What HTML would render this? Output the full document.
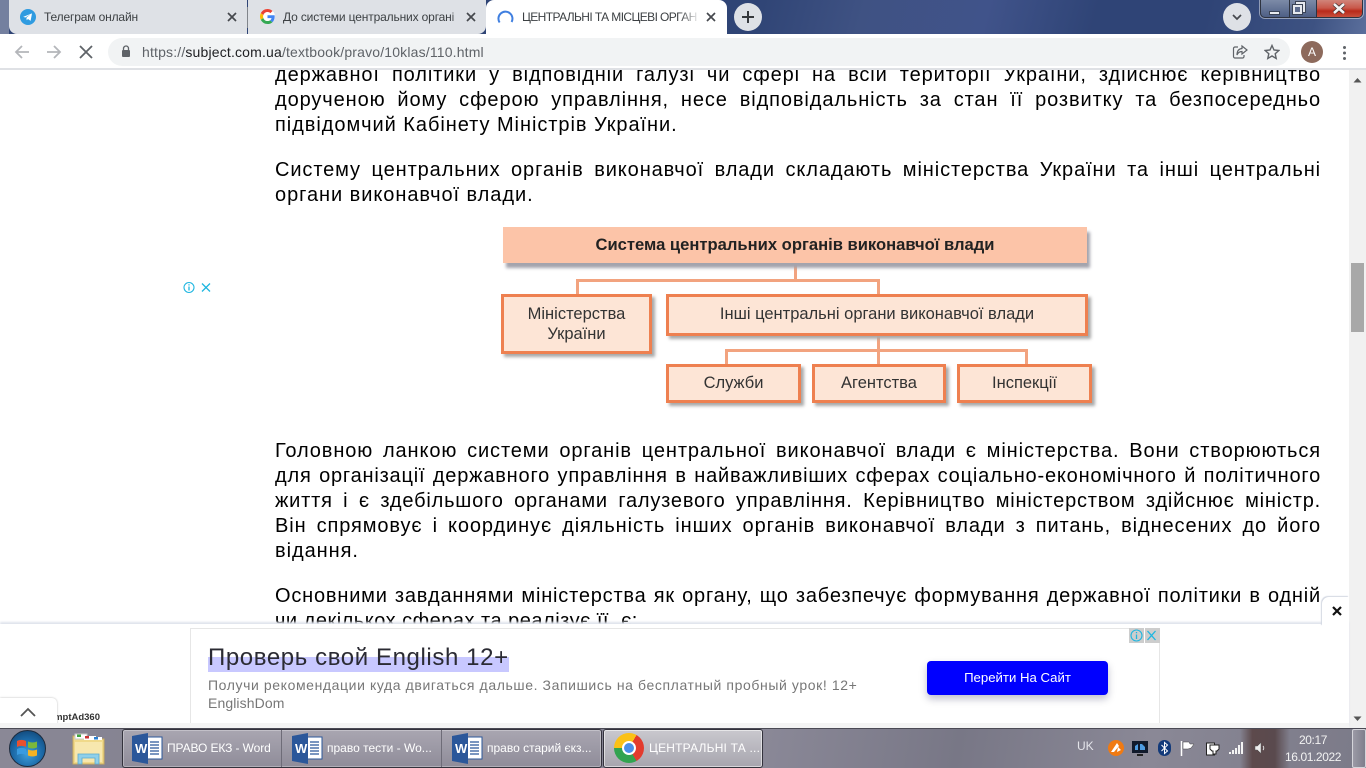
<!DOCTYPE html>
<html lang="uk"><head><meta charset="utf-8"><title>ЦЕНТРАЛЬНІ ТА МІСЦЕВІ ОРГАНИ</title>
<style>
*{box-sizing:border-box}
html,body{margin:0;padding:0;width:1366px;height:768px;overflow:hidden;background:#fff;font-family:"Liberation Sans",sans-serif}
.a{position:absolute}
#top{left:0;top:0;width:1366px;height:34px;background:linear-gradient(105deg,#2f4475 0,#2f4475 55%,#3f5283 63%,#40538a 72%,#2f4476 80%,#2f4476 88%,#3d5282 96%,#5b6f9c 100%)}
.tab{position:absolute;top:0;height:34px;background:#dee1e6;font-size:12px;letter-spacing:-.15px;line-height:34px;color:#3c4043;white-space:nowrap;overflow:hidden}
.x{position:absolute;width:10px;height:10px}
#toolbar{left:0;top:34px;width:1366px;height:36px;background:#fff;border-bottom:2px solid #dfe1e5}
#omni{left:108px;top:38px;width:1182px;height:28px;border-radius:14px;background:#f1f3f4}
#url{left:142px;top:44px;font-size:14px;letter-spacing:.17px;line-height:16px;color:#5f6368;white-space:nowrap}
#url b{font-weight:400;color:#202124}
#content{left:0;top:70px;width:1349px;height:554px;overflow:hidden;background:#fff}
.l{position:absolute;left:275px;width:1046px;height:26px;line-height:26px;font-size:20px;color:#000;text-align:justify;text-align-last:justify;white-space:normal;letter-spacing:.9px}
.n{text-align:left;text-align-last:left;letter-spacing:.95px}
.t{letter-spacing:.8px}
.bx{position:absolute;background:#fde5d6;border:3px solid #ee8050;box-shadow:3px 3px 3px #a9a9a9;color:#333;font-size:16.5px;line-height:20px;text-align:center;filter:blur(.35px)}
.ln{position:absolute;background:#f2a37f}
#adbar{left:0;top:624px;width:1349px;height:104px;background:#fff;box-shadow:0 -2px 2px #dfe3ec}
#sb{left:1349px;top:70px;width:17px;height:658px;background:#f1f1f1}
#tb{left:0;top:728px;width:1366px;height:40px;background:linear-gradient(100deg,#8a8896 0,#7c7a8a 30%,#8b8998 55%,#787786 70%,#8a8896 84%,#7b7a88 100%);border-top:1px solid #4b4a55}
.wb{position:absolute;top:730px;height:38px;color:#fff;font-size:12px;line-height:36px;white-space:nowrap}
</style></head><body>

<div class="a" id="top"></div>
<div class="a" style="left:0;top:0;width:9px;height:34px;background:#74809f"></div>

<div class="tab" style="left:9px;width:238px;border-radius:0 0 0 8px;padding-left:35px">Телеграм онлайн</div>
<svg class="a" style="left:20px;top:9px" width="16" height="16" viewBox="0 0 16 16"><circle cx="8" cy="8" r="8" fill="#2f9be0"/><path d="M3.2 7.9 12 4.4l-1.4 7.5-2.6-1.9-1.3 1.3-.3-2.5 4-3.4-5 3.1z" fill="#fff"/></svg>
<svg class="x" style="left:227px;top:12px" viewBox="0 0 10 10"><path d="M1 1l8 8M9 1l-8 8" stroke="#45484d" stroke-width="1.7"/></svg>
<div class="a" style="left:247px;top:7px;width:1px;height:21px;background:#81858b"></div>

<div class="tab" style="left:248px;width:238px;padding-left:35px;border-radius:0 0 8px 0">До системи центральних органі</div>
<div class="a" style="left:450px;top:0;width:20px;height:34px;background:linear-gradient(90deg,rgba(222,225,230,0),#dee1e6)"></div>
<svg class="a" style="left:260px;top:9px" width="15" height="15" viewBox="0 0 48 48"><circle cx="24" cy="24" r="24" fill="#fff"/><path fill="#ea4335" d="M24 9.500c3.500 0 6.700 1.200 9.200 3.600l6.900-6.900C35.900 2.400 30.500 0 24 0 14.600 0 6.500 5.400 2.600 13.200l8 6.200C12.400 13.700 17.700 9.500 24 9.500z"/><path fill="#4285f4" d="M47 24.500c0-1.600-.2-3.100-.4-4.500H24v9h12.900c-.6 3-2.200 5.500-4.700 7.200l7.700 6C44.400 38.100 47 31.900 47 24.500z"/><path fill="#fbbc05" d="M10.600 28.600c-.5-1.400-.8-3-.8-4.600s.3-3.200.8-4.600l-8-6.200C.9 16.500 0 20.100 0 24s.9 7.500 2.600 10.800z"/><path fill="#34a853" d="M24 48c6.500 0 11.900-2.100 15.900-5.800l-7.700-6c-2.200 1.400-4.900 2.300-8.200 2.300-6.300 0-11.600-4.200-13.400-9.900l-8 6.200C6.500 42.600 14.600 48 24 48z"/></svg>
<svg class="x" style="left:466px;top:12px" viewBox="0 0 10 10"><path d="M1 1l8 8M9 1l-8 8" stroke="#45484d" stroke-width="1.7"/></svg>

<div class="tab" style="left:486px;width:241px;background:#fff;border-radius:8px 8px 0 0;padding-left:36px;color:#3c4043;letter-spacing:-.6px">ЦЕНТРАЛЬНІ ТА МІСЦЕВІ ОРГАН</div>
<div class="a" style="left:680px;top:0;width:20px;height:34px;background:linear-gradient(90deg,rgba(255,255,255,0),#fff)"></div>
<svg class="a" style="left:497px;top:9px" width="17" height="17" viewBox="0 0 17 17"><path d="M2.600 13.500A7 7 0 1 1 14.600 13" fill="none" stroke="#3f7fe0" stroke-width="2"/></svg>
<svg class="x" style="left:706px;top:12px" viewBox="0 0 10 10"><path d="M1 1l8 8M9 1l-8 8" stroke="#45484d" stroke-width="1.7"/></svg>

<div class="a" style="left:734px;top:3px;width:28px;height:28px;border-radius:50%;background:#dee1e6"></div>
<svg class="a" style="left:741px;top:10px" width="14" height="14" viewBox="0 0 14 14"><path d="M7 1v12M1 7h12" stroke="#35383c" stroke-width="2"/></svg>
<div class="a" style="left:1223px;top:3px;width:28px;height:28px;border-radius:50%;background:#dee1e6"></div>
<svg class="a" style="left:1232px;top:14px" width="10" height="7" viewBox="0 0 10 7"><path d="M1 1l4 4 4-4" fill="none" stroke="#45484d" stroke-width="1.700"/></svg>

<!-- window controls -->
<div class="a" style="left:1260px;top:-2px;width:103px;height:20px;border:1px solid #2e3340;border-radius:0 0 5px 5px;overflow:hidden;box-shadow:0 0 0 1px rgba(255,255,255,.45);background:linear-gradient(#7f8da9,#4e5f85)">
 <div class="a" style="left:28px;top:0;width:1px;height:20px;background:#2e3340"></div>
 <div class="a" style="left:55px;top:0;width:46px;height:20px;background:linear-gradient(#d28a80 0,#c9584a 45%,#b92a1a 60%,#cc5b47 100%);border-left:1px solid #2e3340"></div>
</div>
<div class="a" style="left:1269px;top:11px;width:11px;height:4px;background:#e9ecf0;border:1px solid #3b4456"></div>
<div class="a" style="left:1296px;top:2px;width:9px;height:10px;border:2px solid #e6e9ee;box-shadow:0 0 0 1px #3b4456"></div>
<div class="a" style="left:1293px;top:5px;width:9px;height:9px;border:2px solid #e6e9ee;background:#5d6c8e;box-shadow:0 0 0 1px #3b4456"></div>
<svg class="a" style="left:1332px;top:3px" width="14" height="11" viewBox="0 0 14 11"><path d="M2 1l10 9M12 1L2 10" stroke="#3b2a2a" stroke-width="4"/><path d="M2 1l10 9M12 1L2 10" stroke="#f2f2f2" stroke-width="2.600"/></svg>

<!-- toolbar -->
<div class="a" id="toolbar"></div>
<svg class="a" style="left:14px;top:44px" width="16" height="16" viewBox="0 0 16 16"><path d="M15 8H2M8 2L2 8l6 6" fill="none" stroke="#b4b6ba" stroke-width="1.800"/></svg>
<svg class="a" style="left:46px;top:44px" width="16" height="16" viewBox="0 0 16 16"><path d="M1 8h13M8 2l6 6-6 6" fill="none" stroke="#b4b6ba" stroke-width="1.800"/></svg>
<svg class="a" style="left:79px;top:45px" width="14" height="14" viewBox="0 0 14 14"><path d="M1 1l12 12M13 1L1 13" stroke="#5f6368" stroke-width="1.800"/></svg>
<div class="a" id="omni"></div>
<svg class="a" style="left:121px;top:45px" width="10" height="13" viewBox="0 0 10 13"><path d="M2.500 5V3.500a2.500 2.500 0 0 1 5 0V5" fill="none" stroke="#5f6368" stroke-width="1.300"/><rect x="1" y="5" width="8" height="7" rx="1" fill="#5f6368"/></svg>
<div class="a" id="url">https://<b>subject.com.ua</b>/textbook/pravo/10klas/110.html</div>
<svg class="a" style="left:1232px;top:44px" width="16" height="16" viewBox="0 0 16 16"><path d="M6 3H3a1.500 1.500 0 0 0-1.500 1.500v8A1.500 1.500 0 0 0 3 14h7.500a1.500 1.500 0 0 0 1.500-1.500V11" fill="none" stroke="#5f6368" stroke-width="1.200"/><path d="M10 2l5 4-5 4V7.500C7.500 7.500 6 8.500 5 11c0-4 2-6.200 5-6.500z" fill="none" stroke="#5f6368" stroke-width="1.200"/></svg>
<svg class="a" style="left:1264px;top:44px" width="16" height="16" viewBox="0 0 16 16"><path d="M8 1.500l2 4.500 4.800.5-3.600 3.200 1 4.800L8 12l-4.200 2.500 1-4.800L1.200 6.500 6 6z" fill="none" stroke="#5f6368" stroke-width="1.400"/></svg>
<div class="a" style="left:1301px;top:41px;width:22px;height:22px;border-radius:50%;background:#8d6a5c;color:#fff;font-size:12px;line-height:22px;text-align:center">A</div>
<div class="a" style="left:1343px;top:46px;width:3px;height:3px;border-radius:50%;background:#5f6368;box-shadow:0 5.500px 0 #5f6368,0 11px 0 #5f6368"></div>

<!-- content -->
<div class="a" id="content">
 <div class="l" style="top:-8px">державної політики у відповідній галузі чи сфері на всій території України, здійснює керівництво</div>
 <div class="l" style="top:17px">дорученою йому сферою управління, несе відповідальність за стан її розвитку та безпосередньо</div>
 <div class="l n" style="top:42px">підвідомчий Кабінету Міністрів України.</div>
 <div class="l" style="top:87px">Систему центральних органів виконавчої влади складають міністерства України та інші центральні</div>
 <div class="l n" style="top:112px">органи виконавчої влади.</div>

 <div class="l" style="top:368px">Головною ланкою системи органів центральної виконавчої влади є міністерства. Вони створюються</div>
 <div class="l t" style="top:393px">для організації державного управління в найважливіших сферах соціально-економічного й політичного</div>
 <div class="l t" style="top:418px">життя і є здебільшого органами галузевого управління. Керівництво міністерством здійснює міністр.</div>
 <div class="l" style="top:443px">Він спрямовує і координує діяльність інших органів виконавчої влади з питань, віднесених до його</div>
 <div class="l n" style="top:468px">відання.</div>
 <div class="l t" style="top:513px">Основними завданнями міністерства як органу, що забезпечує формування державної політики в одній</div>
 <div class="l n" style="top:538px;letter-spacing:.5px">чи декількох сферах та реалізує її, є:</div>

 <!-- diagram (offset y-70) -->
 <div class="ln" style="left:794px;top:193px;width:3px;height:18px"></div>
 <div class="ln" style="left:576px;top:209px;width:303px;height:3px"></div>
 <div class="ln" style="left:576px;top:209px;width:3px;height:17px"></div>
 <div class="ln" style="left:877px;top:209px;width:3px;height:17px"></div>
 <div class="ln" style="left:877px;top:265px;width:3px;height:30px"></div>
 <div class="ln" style="left:725px;top:279px;width:302px;height:3px"></div>
 <div class="ln" style="left:725px;top:279px;width:3px;height:16px"></div>
 <div class="ln" style="left:1025px;top:279px;width:3px;height:16px"></div>
 <div class="bx" style="left:503px;top:157px;width:584px;height:36px;background:#fcc4a8;border:0;box-shadow:3px 5px 3px #a3a3ad;font-weight:700;line-height:35px;color:#222;font-size:16.600px">Система центральних органів виконавчої влади</div>
 <div class="bx" style="left:501px;top:224px;width:151px;height:60px;padding-top:7px">Міністерства<br>України</div>
 <div class="bx" style="left:666px;top:224px;width:422px;height:42px;line-height:34px">Інші центральні органи виконавчої влади</div>
 <div class="bx" style="left:666px;top:294px;width:135px;height:39px;line-height:33px">Служби</div>
 <div class="bx" style="left:812px;top:294px;width:134px;height:39px;line-height:33px">Агентства</div>
 <div class="bx" style="left:957px;top:294px;width:135px;height:39px;line-height:33px">Інспекції</div>

 <!-- left ad marks -->
 <svg class="a" style="left:183px;top:211px" width="29" height="13" viewBox="0 0 29 13"><circle cx="6" cy="6.500" r="5" fill="none" stroke="#1fb6e0" stroke-width="1.100"/><path d="M6 5.500v4M6 3.300v1.200" stroke="#1fb6e0" stroke-width="1.300"/><path d="M19 2.500l8 8M27 2.500l-8 8" stroke="#1fb6e0" stroke-width="1.300"/></svg>
</div>

<!-- scrollbar -->
<div class="a" id="sb"></div>
<svg class="a" style="left:1353px;top:77px" width="9" height="6" viewBox="0 0 9 6"><path d="M4.500 1L8.500 5.500H.5z" fill="#555"/></svg>
<div class="a" style="left:1351px;top:263px;width:13px;height:69px;background:#a8a8a8"></div>
<svg class="a" style="left:1353px;top:716px" width="9" height="6" viewBox="0 0 9 6"><path d="M4.500 5L8.500 .5H.5z" fill="#555"/></svg>

<!-- bottom ad -->
<div class="a" id="adbar"></div>
<div class="a" style="left:1322px;top:597px;width:27px;height:29px;background:#fff;border-radius:7px 0 0 0;box-shadow:-1px -1px 1px #d3d8e2"></div>
<svg class="a" style="left:1332px;top:606px" width="10" height="10" viewBox="0 0 10 10"><path d="M1 1l8 8M9 1L1 9" stroke="#111" stroke-width="2.200"/></svg>
<div class="a" style="left:190px;top:628px;width:970px;height:96px;border:1px solid #e6e6e6;border-bottom:0;background:#fff"></div>
<div class="a" style="left:208px;top:657px;width:301px;height:15px;background:#c8c8ff"></div>
<div class="a" style="left:208px;top:644px;font-size:24px;line-height:28px;color:#2b2b33;white-space:nowrap;letter-spacing:.6px">Проверь свой English 12+</div>
<div class="a" style="left:208px;top:676px;width:700px;font-size:14px;letter-spacing:.6px;line-height:18px;color:#777">Получи рекомендации куда двигаться дальше. Запишись на бесплатный пробный урок! 12+<br><span style="letter-spacing:.1px">EnglishDom</span></div>
<div class="a" style="left:927px;top:661px;width:181px;height:34px;background:#0000ff;border-radius:4px;box-shadow:0 4px 8px rgba(0,0,60,.25);color:#fff;font-size:13.200px;line-height:33px;text-align:center">Перейти На Сайт</div>
<div class="a" style="left:1129px;top:628px;width:31px;height:15px;background:#cdcdcd"></div>
<div class="a" style="left:1144px;top:628px;width:1px;height:15px;background:#fff"></div>
<svg class="a" style="left:1129px;top:628px" width="31" height="15" viewBox="0 0 31 15"><circle cx="7.500" cy="7.500" r="5.500" fill="none" stroke="#1fb6e0" stroke-width="1.100"/><path d="M7.500 6.500v4.500M7.500 4v1.300" stroke="#1fb6e0" stroke-width="1.300"/><path d="M18.500 3l8 9M26.500 3l-8 9" stroke="#1fb6e0" stroke-width="1.300"/></svg>
<div class="a" style="left:48px;top:712px;font-size:9.500px;line-height:12px;color:#333;font-weight:700;width:52px;white-space:nowrap;overflow:hidden;text-align:right">mptAd360</div>
<div class="a" style="left:0;top:698px;width:57px;height:30px;background:#fff;border-radius:0 5px 0 0;box-shadow:0 0 2px #bbb"></div>
<svg class="a" style="left:20px;top:707px" width="16" height="10" viewBox="0 0 16 10"><path d="M1 9l7-7 7 7" fill="none" stroke="#555" stroke-width="1.800"/></svg>
<div class="a" style="left:0;top:723px;width:1349px;height:5px;background:#f4f4f4"></div>

<!-- taskbar -->
<div class="a" id="tb"></div>
<div class="a" style="left:1240px;top:729px;width:50px;height:39px;background:linear-gradient(90deg,rgba(90,70,70,0),#5d4a4c 25%,#5a4a4e 70%,rgba(90,70,70,0))"></div>
<!-- start orb -->
<div class="a" style="left:9px;top:730px;width:37px;height:37px;border-radius:50%;background:radial-gradient(circle at 50% 65%,#3fa0dc 0,#1c6aa8 50%,#0d3a66 100%);border:1px solid #1c2b3e"></div>
<svg class="a" style="left:16px;top:737px" width="23" height="22" viewBox="0 0 23 22"><path d="M1 4c3-1.500 6-1.500 9 0v6C7 8.500 4 8.500 1 10z" fill="#e8512f"/><path d="M12 4.500c3 1.300 6 1.300 9 0v6c-3 1.300-6 1.300-9 0z" fill="#7cb83b"/><path d="M1 12c3-1.500 6-1.500 9 0v6c-3-1.500-6-1.500-9 0z" fill="#3a9be0"/><path d="M12 12.500c3 1.300 6 1.300 9 0v6c-3 1.300-6 1.300-9 0z" fill="#f5b324"/></svg>
<!-- folder -->
<svg class="a" style="left:72px;top:732px" width="33" height="34" viewBox="0 0 33 34"><path d="M1 4h12l2 3h17v25H1z" fill="#f0d98a" stroke="#c9aa5c"/><rect x="3" y="2" width="12" height="5" fill="#fff" stroke="#c9c9c9"/><rect x="5" y="2.500" width="4" height="2.500" fill="#3fa53f"/><rect x="12" y="4" width="12" height="4" fill="#fff"/><rect x="13" y="4" width="4" height="2.500" fill="#c33"/><rect x="20" y="5" width="10" height="3" fill="#fff"/><rect x="22" y="5" width="4" height="2.500" fill="#2a7fd0"/><path d="M3 10h27v20H3z" fill="#f7e7ae"/><path d="M6 22h21v10h-4v-6H10v6H6z" fill="#8fd0ea" stroke="#5aa9cf" stroke-width=".8"/></svg>

<!-- word buttons -->
<div class="a" style="left:122px;top:729px;width:480px;height:39px;background:linear-gradient(#a9a6b1,#8f8c99);border:1px solid #33323c;border-radius:3px;box-shadow:inset 0 0 0 1px rgba(255,255,255,.3)"></div>
<div class="a" style="left:281px;top:730px;width:1px;height:37px;background:#6e6c78"></div>
<div class="a" style="left:441px;top:730px;width:1px;height:37px;background:#6e6c78"></div>
<svg class="a" style="left:132px;top:733px" width="31" height="31" viewBox="0 0 31 31"><rect x="13" y="4" width="17" height="22" fill="#fff" stroke="#2b579a"/><path d="M18 9h9M18 12h9M18 15h9M18 18h9M18 21h9" stroke="#2b579a" stroke-width="1.200"/><path d="M0 3l16-3v31L0 28z" fill="#2b579a"/><text x="3" y="20" font-family="Liberation Sans" font-size="13" font-weight="700" fill="#fff">W</text></svg>
<div class="wb" style="left:167px;letter-spacing:-.1px">ПРАВО ЕКЗ - Word</div>
<svg class="a" style="left:292px;top:733px" width="31" height="31" viewBox="0 0 31 31"><rect x="13" y="4" width="17" height="22" fill="#fff" stroke="#2b579a"/><path d="M18 9h9M18 12h9M18 15h9M18 18h9M18 21h9" stroke="#2b579a" stroke-width="1.200"/><path d="M0 3l16-3v31L0 28z" fill="#2b579a"/><text x="3" y="20" font-family="Liberation Sans" font-size="13" font-weight="700" fill="#fff">W</text></svg>
<div class="wb" style="left:327px">право тести - Wo...</div>
<svg class="a" style="left:452px;top:733px" width="31" height="31" viewBox="0 0 31 31"><rect x="13" y="4" width="17" height="22" fill="#fff" stroke="#2b579a"/><path d="M18 9h9M18 12h9M18 15h9M18 18h9M18 21h9" stroke="#2b579a" stroke-width="1.200"/><path d="M0 3l16-3v31L0 28z" fill="#2b579a"/><text x="3" y="20" font-family="Liberation Sans" font-size="13" font-weight="700" fill="#fff">W</text></svg>
<div class="wb" style="left:487px">право старий єкз...</div>

<!-- chrome button -->
<div class="a" style="left:603px;top:729px;width:160px;height:39px;background:linear-gradient(#c9c8ce,#a7a5ae);border:1px solid #33323c;border-radius:3px;box-shadow:inset 0 0 0 1px rgba(255,255,255,.55)"></div>
<div class="a" style="left:614px;top:733px;width:30px;height:30px;border-radius:50%;background:conic-gradient(from 30deg,#e33b2e 0 120deg,#32a350 120deg 240deg,#fbc116 240deg 360deg)"></div>
<div class="a" style="left:622px;top:741px;width:14px;height:14px;border-radius:50%;background:#4a8fe8;border:2px solid #fff"></div>
<div class="wb" style="left:649px;letter-spacing:.2px">ЦЕНТРАЛЬНІ ТА ...</div>

<!-- tray -->
<div class="a" style="left:1077px;top:739px;font-size:12px;line-height:14px;color:#e4e4ea">UK</div>
<svg class="a" style="left:1108px;top:740px" width="16" height="16" viewBox="0 0 16 16"><circle cx="8" cy="8" r="8" fill="#f07a12"/><path d="M3 12L9 3l2 3-5 6zM10 7l3 3-4 2z" fill="#fff"/></svg>
<svg class="a" style="left:1132px;top:741px" width="16" height="16" viewBox="0 0 16 16"><rect x="0" y="0" width="16" height="12" fill="#111a2c"/><path d="M3 9V5l3-2v6zM8 9V3h2l3 3v3z" fill="#4e9be0"/><rect x="5" y="13" width="6" height="2" fill="#222"/></svg>
<svg class="a" style="left:1158px;top:740px" width="13" height="16" viewBox="0 0 13 16"><rect x="0" y="0" width="13" height="16" rx="6.500" fill="#123a7a"/><path d="M3.500 5l6 6-3 2.500V2.500l3 2.500-6 6" fill="none" stroke="#fff" stroke-width="1"/></svg>
<svg class="a" style="left:1180px;top:741px" width="15" height="15" viewBox="0 0 15 15"><path d="M1.500 0v15" stroke="#fff" stroke-width="1.500"/><path d="M3 1h6l1 2h4l-3 4-3 1H3z" fill="#fff" stroke="#444" stroke-width=".5"/></svg>
<svg class="a" style="left:1205px;top:740px" width="15" height="16" viewBox="0 0 15 16"><path d="M1.500 3h8v12h-8z" fill="#fff" stroke="#222"/><path d="M5 5h9v4l-2 2h-1v3H8v-3H7L5 9z" fill="#fff" stroke="#222"/></svg>
<svg class="a" style="left:1228px;top:741px" width="16" height="14" viewBox="0 0 16 14"><path d="M1 11h2v2H1zM4 9h2v4H4zM7 7h2v6H7zM10 4h2v9h-2zM13 1h2v12h-2z" fill="#f4f4f4"/></svg>
<svg class="a" style="left:1254px;top:741px" width="12" height="14" viewBox="0 0 12 14"><path d="M1 5h2.500L7 1.500v11L3.500 9H1z" fill="#eee" stroke="#555" stroke-width=".5"/><path d="M9 5c1 1 1 3 0 4" fill="none" stroke="#ddd"/></svg>
<div class="a" style="left:1280px;top:732px;width:66px;color:#f2f2f2;font-size:12px;letter-spacing:-.4px;line-height:17px;text-align:center">20:17<br>16.01.2022</div>
<div class="a" style="left:1352px;top:729px;width:14px;height:39px;background:linear-gradient(90deg,#9b9aa6,#7f7e8c);border:1px solid #d4d4da;border-radius:2px"></div>
</body></html>
